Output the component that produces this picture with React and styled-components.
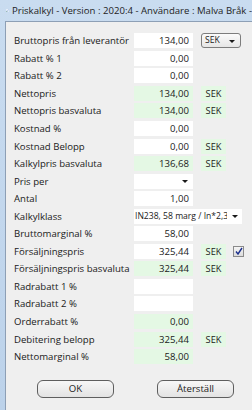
import React from "react";
import styled, { createGlobalStyle } from "styled-components";

const Global = createGlobalStyle`
  html, body { margin: 0; padding: 0; }
  body { width: 252px; height: 410px; overflow: hidden; font-family: "Open Sans", "Noto Sans", sans-serif; }
`;

const Frame = styled.div`
  width: 252px;
  height: 410px;
  background: linear-gradient(180deg, #c9dcf0 0%, #bcd2ea 100%);
  display: flex;
  flex-direction: column;
  overflow: hidden;
`;

const TitleBar = styled.div`
  height: 21px;
  display: flex;
  align-items: center;
  padding-left: 6px;
  gap: 3px;
  white-space: nowrap;
  font-size: 9.6px;
  color: #1e1e1e;
  flex-shrink: 0;
`;

const Body = styled.div`
  flex: 1;
  margin-left: 5px;
  border-left: 1px solid #8d9fb5;
  border-top: 1px solid #8d9fb5;
  background: #efefef;
  padding: 10px 0 0 8px;
  display: flex;
  flex-direction: column;
`;

const Form = styled.div`
  display: grid;
  grid-template-columns: 120px 59px 33px 18px;
  grid-auto-rows: 17.55px;
  align-items: center;
`;

const Label = styled.div`
  font-size: 9.6px;
  color: #1a1a1a;
  white-space: nowrap;
`;

const Box = styled.div`
  height: 15px;
  background: ${(p) => (p.$green ? "#e4f8e4" : "#ffffff")};
  font-size: 9.6px;
  color: #1a1a1a;
  text-align: right;
  padding-right: 4px;
  line-height: 15px;
  box-sizing: border-box;
  position: relative;
`;

const Unit = styled.div`
  margin-left: 8px;
  width: 25px;
  height: 15px;
  background: #e4f8e4;
  font-size: 9.2px;
  line-height: 15px;
  text-align: center;
  box-sizing: border-box;
  color: #1a1a1a;
`;

const Select = styled.div`
  margin-left: 8px;
  width: 40px;
  height: 15px;
  box-sizing: border-box;
  border: 1px solid #7d7d7d;
  border-radius: 3px;
  background: linear-gradient(180deg, #fbfbfb 0%, #e6e6e6 100%);
  font-size: 8.6px;
  line-height: 13px;
  padding-left: 3px;
  color: #1a1a1a;
  position: relative;
`;

const Arrow = styled.span`
  position: absolute;
  right: ${(p) => p.$right}px;
  top: 6px;
  width: 0;
  height: 0;
  border-left: 3px solid transparent;
  border-right: 3px solid transparent;
  border-top: 3px solid #1a1a1a;
`;

const WideSelect = styled.div`
  grid-column: 2 / span 3;
  width: 108px;
  height: 15px;
  background: #ffffff;
  font-size: 8.6px;
  line-height: 15px;
  padding-left: 1px;
  box-sizing: border-box;
  color: #1a1a1a;
  position: relative;
  white-space: nowrap;
  display: flex;
`;

const ClipText = styled.span`
  display: block;
  width: 92px;
  overflow: hidden;
  white-space: nowrap;
`;

const Check = styled.div`
  margin-left: 7px;
  width: 11px;
  height: 11px;
  box-sizing: border-box;
  border: 1px solid #8a8a8a;
  background: linear-gradient(180deg, #f4f4f4, #dcdcdc);
  display: flex;
  align-items: center;
  justify-content: center;
`;

const Buttons = styled.div`
  display: flex;
  gap: 43px;
  padding-left: 23px;
  margin-top: 15px;
`;

const Button = styled.div`
  width: 77px;
  height: 18px;
  box-sizing: border-box;
  border: 1px solid #5e5e5e;
  border-radius: 6px;
  background: linear-gradient(180deg, #f7f7f7 0%, #e3e3e3 100%);
  font-size: 9.6px;
  line-height: 16px;
  text-align: center;
  color: #1a1a1a;
`;

const rows = [
  { label: "Bruttopris från leverantör", value: "134,00", select: true },
  { label: "Rabatt % 1", value: "0,00" },
  { label: "Rabatt % 2", value: "0,00" },
  { label: "Nettopris", value: "134,00", green: true, unit: true },
  { label: "Nettopris basvaluta", value: "134,00", green: true, unit: true },
  { label: "Kostnad %", value: "0,00" },
  { label: "Kostnad Belopp", value: "0,00", unit: true },
  { label: "Kalkylpris basvaluta", value: "136,68", green: true, unit: true },
  { label: "Pris per", value: "", dropdown: true },
  { label: "Antal", value: "1,00" },
  { label: "Kalkylklass", wide: "IN238, 58 marg / In*2,3" },
  { label: "Bruttomarginal %", value: "58,00" },
  { label: "Försäljningspris", value: "325,44", unit: true, check: true },
  { label: "Försäljningspris basvaluta", value: "325,44", green: true, unit: true },
  { label: "Radrabatt 1 %", value: "" },
  { label: "Radrabatt 2 %", value: "" },
  { label: "Orderrabatt %", value: "0,00", green: true },
  { label: "Debitering belopp", value: "325,44", green: true, unit: true },
  { label: "Nettomarginal %", value: "58,00", green: true },
];

const AppIcon = () => (
  <svg width="13" height="13" viewBox="0 0 13 13">
    <rect x="0.5" y="0.5" width="12" height="12" fill="#eef3fa" />
    <path d="M3 8 L5 11 L11 2" stroke="#1f5fbf" strokeWidth="1.4" fill="none" />
    <rect x="1" y="10" width="4" height="2" fill="#3a7a3a" />
  </svg>
);

export default function App() {
  return (
    <>
      <Global />
      <Frame>
        <TitleBar>
          <AppIcon />
          <span>Priskalkyl - Version : 2020:4 - Användare : Malva Bråk -</span>
        </TitleBar>
        <Body>
          <Form>
            {rows.map((r, i) => (
              <React.Fragment key={i}>
                <Label>{r.label}</Label>
                {r.wide ? (
                  <WideSelect>
                    <ClipText>{r.wide}</ClipText>
                    <Arrow $right={4} />
                  </WideSelect>
                ) : (
                  <Box $green={r.green}>
                    {r.value}
                    {r.dropdown && <Arrow $right={5} />}
                  </Box>
                )}
                {!r.wide && (r.select ? (
                  <Select>
                    SEK
                    <Arrow $right={5} />
                  </Select>
                ) : r.unit ? (
                  <Unit>SEK</Unit>
                ) : (
                  <span />
                ))}
                {!r.wide && (r.check ? (
                  <Check>
                    <svg width="8" height="8" viewBox="0 0 8 8">
                      <path d="M1 4.5 L3 7 L7 1" stroke="#1b2f8c" strokeWidth="1.4" fill="none" />
                    </svg>
                  </Check>
                ) : (
                  <span />
                ))}
              </React.Fragment>
            ))}
          </Form>
          <Buttons>
            <Button>OK</Button>
            <Button>Återställ</Button>
          </Buttons>
        </Body>
      </Frame>
    </>
  );
}
